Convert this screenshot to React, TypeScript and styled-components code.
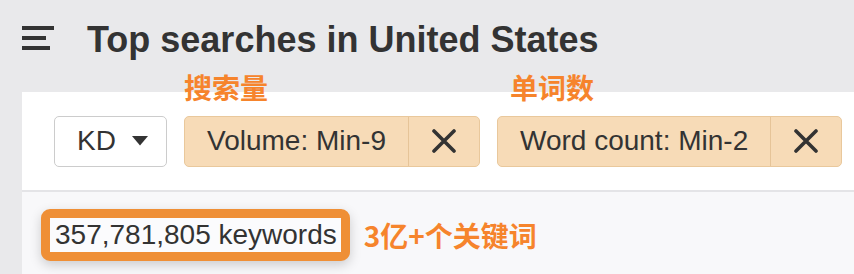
import styled, { createGlobalStyle } from 'styled-components';

const ORANGE = '#f6842c';

const GlobalStyle = createGlobalStyle`
	body {
		margin: 0;
		background: #e9e9eb;
		font-family: 'Liberation Sans', Arial, sans-serif;
		color: #333;
	}
`;

const Page = styled.div`
	width: 854px;
	height: 274px;
	overflow: hidden;
`;

const Header = styled.div`
	display: flex;
	align-items: center;
	gap: 33px;
	height: 76px;
	padding-left: 22px;
	margin-bottom: 16px;
`;

const Title = styled.h1`
	margin: 4px 0 0;
	font-size: 36px;
	line-height: 1;
	font-weight: 700;
	color: #333;
	white-space: nowrap;
`;

const Panel = styled.div`
	margin-left: 22px;
	background: #f8f8fa;
`;

const FilterRow = styled.div`
	display: flex;
	align-items: center;
	gap: 17px;
	height: 98px;
	padding: 0 32px;
	background: #fff;
	border-bottom: 2px solid #e4e4e7;
`;

const SelectButton = styled.div`
	display: flex;
	align-items: center;
	gap: 16px;
	flex-shrink: 0;
	box-sizing: border-box;
	height: 51px;
	width: 113px;
	padding-left: 22px;
	border: 1px solid #cccccc;
	border-radius: 5px;
	background: #fff;
	font-size: 28px;
`;

const Chip = styled.div`
	position: relative;
	display: flex;
	flex-shrink: 0;
	box-sizing: border-box;
	height: 51px;
	border: 1px solid #e9c89c;
	border-radius: 5px;
	background: #f7dbb7;
	font-size: 28px;
	white-space: nowrap;
`;

const ChipLabel = styled.div`
	display: flex;
	align-items: center;
	padding: 0 22px;
	border-right: 1px solid #e6c498;
`;

const ChipClose = styled.div`
	display: flex;
	align-items: center;
	justify-content: center;
	width: 70px;
`;

const Callout = styled.span<{ $left: number }>`
	position: absolute;
	top: -46px;
	left: ${(p) => p.$left}px;
	font-family: 'Noto Sans CJK SC', sans-serif;
	font-size: 28px;
	font-weight: 700;
	line-height: 1.2;
	color: ${ORANGE};
	white-space: nowrap;
`;

const ResultRow = styled.div`
	display: flex;
	align-items: center;
	gap: 14px;
	height: 82px;
	padding-left: 19px;
	padding-top: 3px;
	box-sizing: border-box;
`;

const CountBox = styled.div`
	border: 9px solid #ef8f36;
	border-radius: 9px;
	background: #fbfbfd;
	padding: 2px 4px 2px 5px;
	font-size: 28px;
	line-height: 30px;
	color: #333;
	box-shadow: 0 4px 12px rgba(0, 0, 0, 0.18);
`;

const Note = styled.span`
	font-family: 'Noto Sans CJK SC', sans-serif;
	font-size: 28px;
	font-weight: 700;
	color: ${ORANGE};
`;

function MenuIcon() {
	return (
		<svg width="32" height="24" viewBox="0 0 32 24">
			<rect x="0" y="0" width="32" height="4" fill="#333" />
			<rect x="0" y="10" width="24" height="4" fill="#333" />
			<rect x="0" y="20" width="28" height="4" fill="#333" />
		</svg>
	);
}

function Caret() {
	return (
		<svg width="16" height="10" viewBox="0 0 16 10">
			<path d="M0 0 L16 0 L8 9.5 Z" fill="#333" />
		</svg>
	);
}

function CloseIcon() {
	return (
		<svg width="24" height="24" viewBox="0 0 24 24">
			<path
				d="M2 2 L22 22 M22 2 L2 22"
				stroke="#333"
				strokeWidth="3.6"
				strokeLinecap="round"
			/>
		</svg>
	);
}

const filters = [
	{ label: 'Volume: Min-9', note: '搜索量', noteLeft: -1 },
	{ label: 'Word count: Min-2', note: '单词数', noteLeft: 12 },
];

export default function App() {
	return (
		<Page>
			<GlobalStyle />
			<Header>
				<MenuIcon />
				<Title>Top searches in United States</Title>
			</Header>
			<Panel>
				<FilterRow>
					<SelectButton>
						KD
						<Caret />
					</SelectButton>
					{filters.map((f) => (
						<Chip key={f.label}>
							<Callout $left={f.noteLeft}>{f.note}</Callout>
							<ChipLabel>{f.label}</ChipLabel>
							<ChipClose>
								<CloseIcon />
							</ChipClose>
						</Chip>
					))}
				</FilterRow>
				<ResultRow>
					<CountBox>357,781,805 keywords</CountBox>
					<Note>3亿+个关键词</Note>
				</ResultRow>
			</Panel>
		</Page>
	);
}
